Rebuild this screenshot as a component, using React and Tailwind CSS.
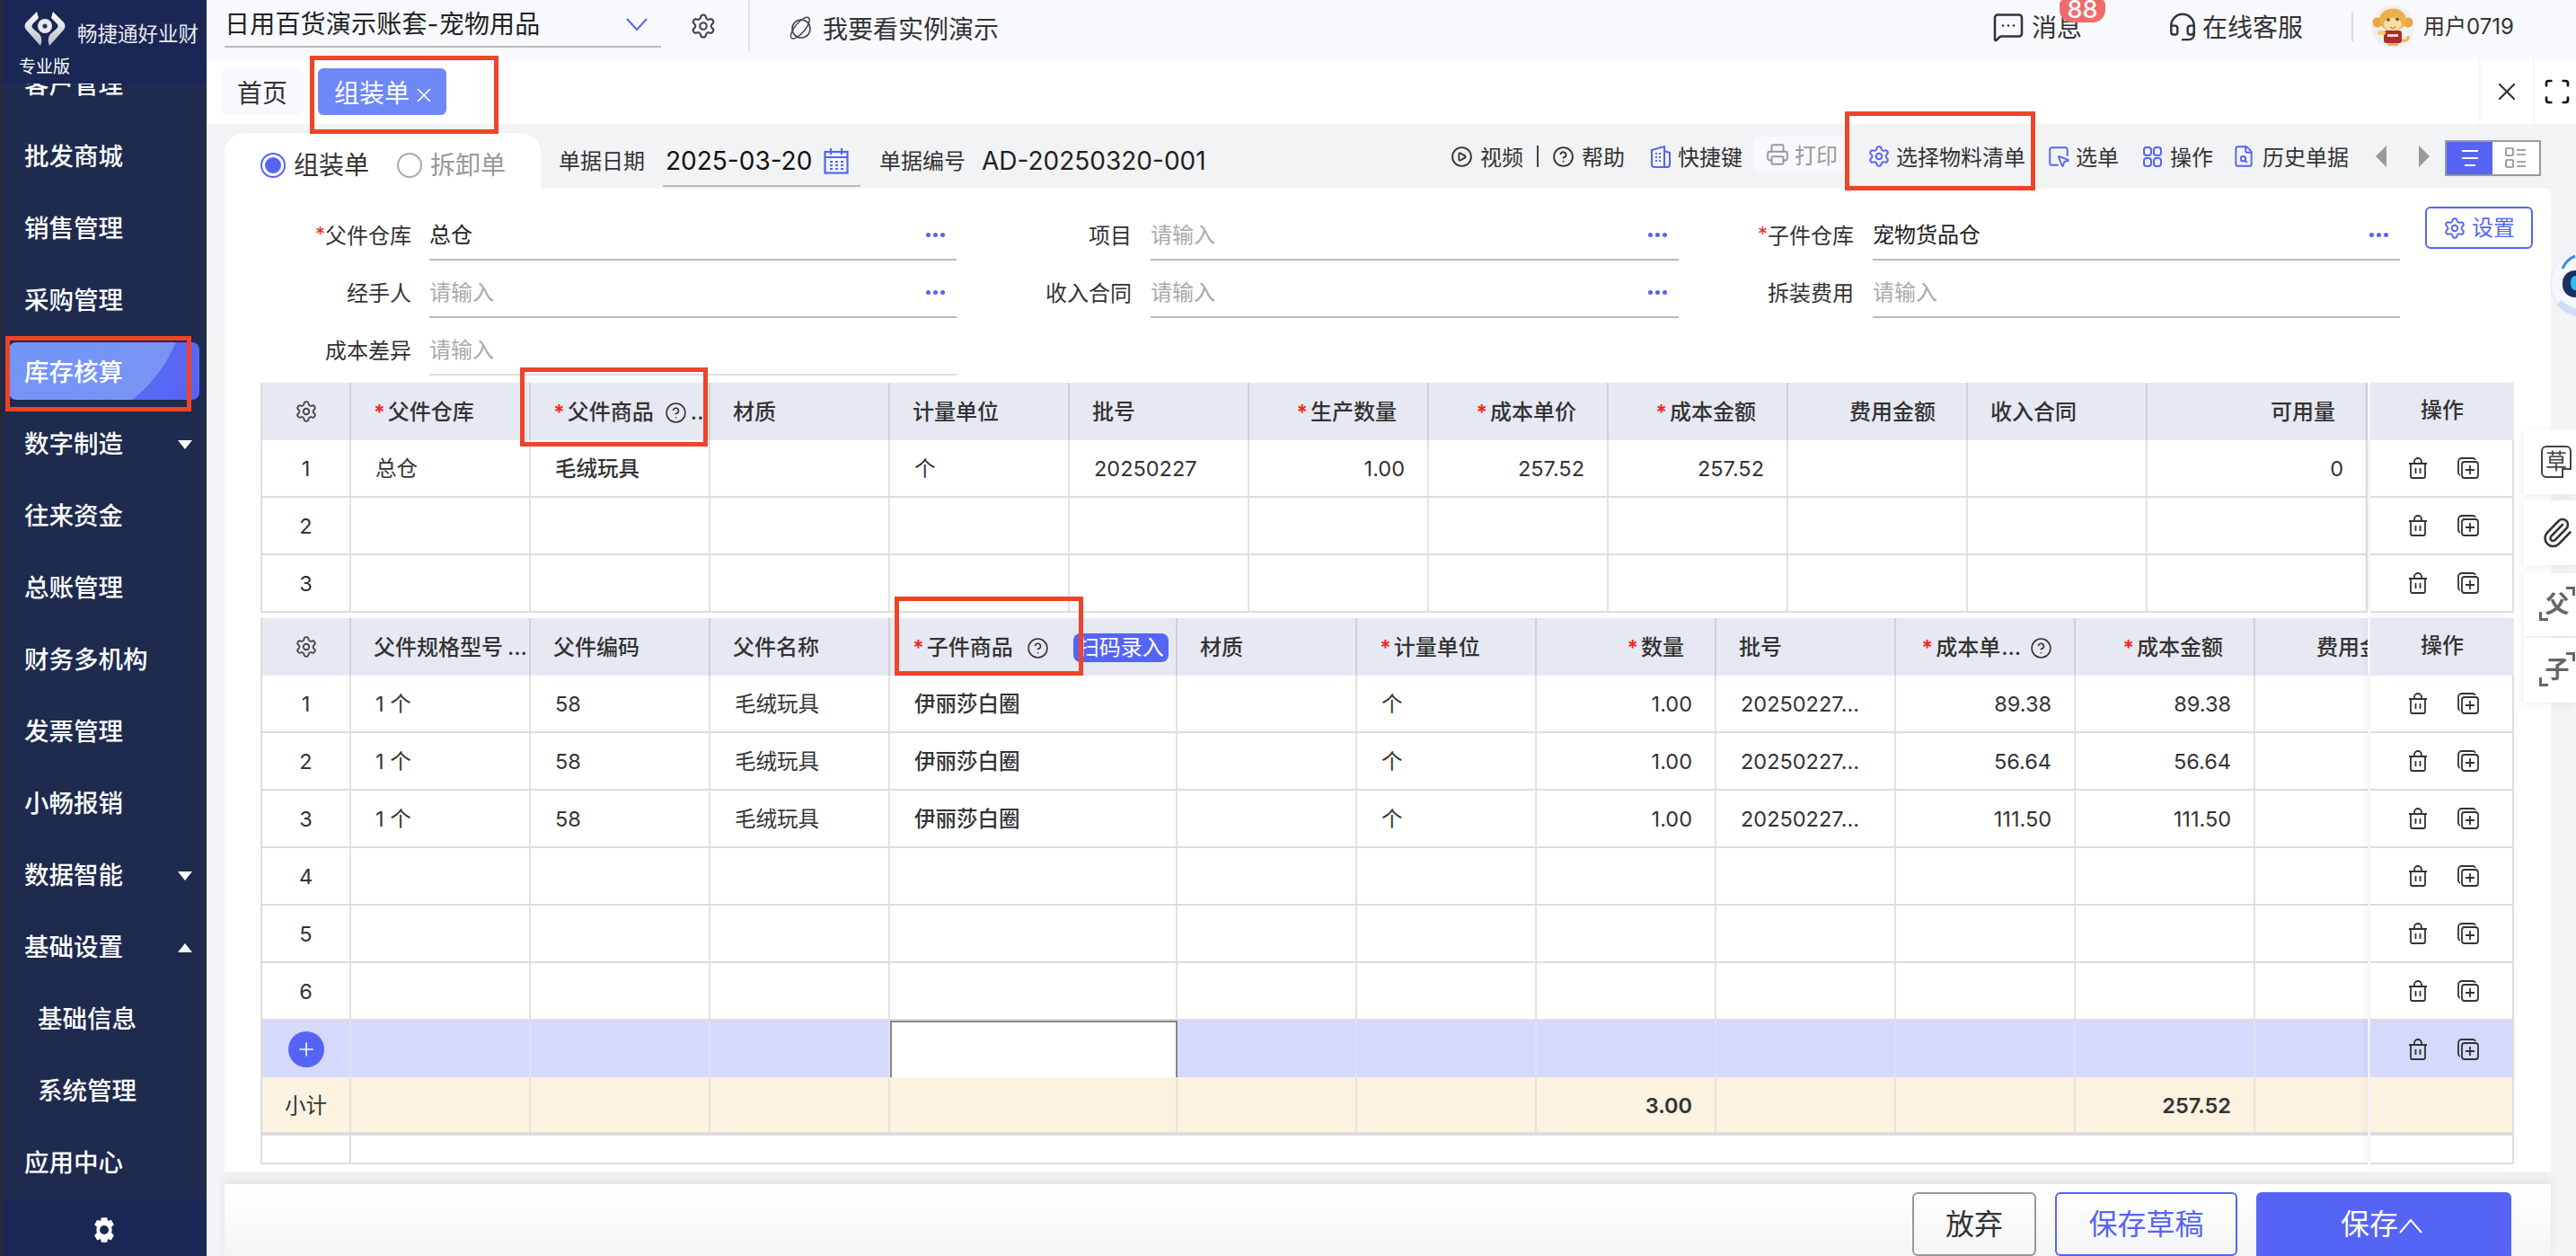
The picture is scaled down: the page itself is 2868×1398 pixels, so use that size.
import React from 'react';
import { Settings, X, Scan, MessageSquareMore, Headset, CirclePlay, CircleHelp, Printer, SquareMousePointer, FileSearch, Paperclip, Plus } from 'lucide-react';

const navItems = [
  { t: '客户管理' }, { t: '批发商城' }, { t: '销售管理' }, { t: '采购管理' },
  { t: '库存核算', active: true }, { t: '数字制造', caret: 'down' }, { t: '往来资金' }, { t: '总账管理' },
  { t: '财务多机构' }, { t: '发票管理' }, { t: '小畅报销' }, { t: '数据智能', caret: 'down' },
  { t: '基础设置', caret: 'up' }, { t: '基础信息', sub: true }, { t: '系统管理', sub: true }, { t: '应用中心' },
];

function Logo() {
  return (
    <svg width="46" height="38" viewBox="0 0 46 38" className="shrink-0">
      <defs>
        <linearGradient id="lg" x1="0" y1="0" x2="0" y2="1">
          <stop offset="0" stopColor="#ffffff" />
          <stop offset="1" stopColor="#b9bcc6" />
        </linearGradient>
      </defs>
      <path d="M14 0 L2 12 Q-1 16 2 20 L18 38 Q21 30 17 25 L10 19 Q7 16 10 13 L16 7 Z" fill="url(#lg)" />
      <path d="M32 0 L44 12 Q47 16 44 20 L28 38 Q25 30 29 25 L36 19 Q39 16 36 13 L30 7 Z" fill="url(#lg)" />
      <ellipse cx="23" cy="16" rx="8" ry="8" fill="#e8e9ee" />
      <circle cx="23" cy="16" r="2.6" fill="#2a3560" />
    </svg>
  );
}

function Sidebar() {
  return (
    <aside className="w-[230px] h-full shrink-0 flex flex-col bg-[#1e2b4f] border-l-2 border-[#2a2a30] overflow-hidden">
      <div className="relative z-10 h-[93px] shrink-0 bg-[#1a2755] pl-[25px] pt-[13px]">
        <div className="flex items-start">
          <Logo />
          <span className="ml-[13px] mt-[12px] text-[22.5px] leading-[26px] text-[#e9eaf0] whitespace-nowrap">畅捷通好业财</span>
        </div>
        <div className="-ml-[6px] mt-[12px] text-[19px] leading-[24px] text-white">专业版</div>
      </div>
      <nav className="flex-1 -mt-[40px] flex flex-col">
        {navItems.map((n) => (
          <div key={n.t} className="h-[80px] shrink-0 px-[8px] py-[8px]">
            <div className={n.active
              ? 'h-full rounded-[8px] flex items-center pl-[17px] text-white bg-[radial-gradient(circle_at_40px_-60px,#6b98f7_0px,#7a93f5_157px,#5a68f5_158px,#5664f5_100%)]'
              : n.sub ? 'h-full flex items-center pl-[32px] text-white' : 'h-full flex items-center pl-[17px] text-white'}>
              <span className="flex-1 pt-[1px] text-[27.5px] leading-[36px] font-medium whitespace-nowrap">{n.t}</span>
              {n.caret && (
                <svg width="16" height="10" viewBox="0 0 16 10" className="mr-[8px] mt-[4px]">
                  <polygon points={n.caret === 'up' ? '8,0 16,10 0,10' : '0,0 16,0 8,10'} fill="#fff" />
                </svg>
              )}
            </div>
          </div>
        ))}
      </nav>
      <div className="h-[64px] shrink-0 bg-[#1a2755] flex items-center justify-center">
        <svg width="30" height="32" viewBox="0 0 24 24" className="mt-[6px]">
          <path fill="#fff" fillRule="evenodd" d="M9.5 1h5l.8 3 2.9-1.1 2.5 4.4-2.2 2.1a8 8 0 0 1 0 5.2l2.2 2.1-2.5 4.4-2.9-1.1-.8 3h-5l-.8-3-2.9 1.1-2.5-4.4 2.2-2.1a8 8 0 0 1 0-5.2L3.3 7.3l2.5-4.4L8.7 4zM12 8a4 4 0 1 0 0 8 4 4 0 0 0 0-8z" />
        </svg>
      </div>
    </aside>
  );
}

function Planet() {
  return (
    <svg width="31" height="32" viewBox="0 0 31 32" fill="none" stroke="#444" strokeWidth="1.6">
      <circle cx="15" cy="16" r="10" />
      <ellipse cx="15.5" cy="15" rx="16" ry="6" transform="rotate(-50 15.5 15) scale(.92)" />
    </svg>
  );
}

function Monkey() {
  return (
    <svg width="48" height="48" viewBox="0 0 48 48" className="shrink-0">
      <circle cx="24" cy="24" r="24" fill="#efefef" />
      <path d="M32 38c6 3 10 0 9-4" stroke="#eeb158" strokeWidth="3" fill="none" />
      <circle cx="7" cy="19" r="5.5" fill="#eda544" />
      <circle cx="41" cy="19" r="5.5" fill="#eda544" />
      <ellipse cx="24" cy="16" rx="15" ry="12.5" fill="#eeb04c" />
      <ellipse cx="24" cy="21" rx="10" ry="7" fill="#f9dda2" />
      <circle cx="19" cy="16" r="1.8" fill="#553" />
      <circle cx="29" cy="15.5" r="1.8" fill="#553" />
      <path d="M21 24q3 3 6 0" fill="#fff" stroke="#a33" />
      <rect x="14" y="28" width="20" height="14" rx="3" fill="#b12a2a" />
      <rect x="18" y="32" width="12" height="3" fill="#f3d9d0" />
      <rect x="7" y="28" width="9" height="5" rx="2.5" fill="#f6cf6b" />
      <rect x="18" y="42" width="12" height="3" rx="1" fill="#eeb04c" />
    </svg>
  );
}

function TopBar() {
  return (
    <header className="h-[66px] shrink-0 bg-[#f7f9fd] flex items-start">
      <div className="ml-[20px] w-[486px] h-[53px] border-b-[2px] border-[#bbbbbb] flex items-center justify-between pr-[14px] pt-[3px] shrink-0">
        <span className="text-[28px] leading-[36px] tracking-[0.2px] text-[#222] whitespace-nowrap">日用百货演示账套-宠物用品</span>
        <svg width="26" height="16" viewBox="0 0 26 16" fill="none" stroke="#5664f5" strokeWidth="2"><path d="M2 2l11 12L24 2" /></svg>
      </div>
      <Settings size={30} strokeWidth={1.7} color="#444" className="ml-[32px] mt-[14px] shrink-0" />
      <div className="ml-[35px] w-[2px] h-[58px] bg-[#e3e4e8] shrink-0" />
      <div className="ml-[42px] h-[64px] flex items-center shrink-0">
        <Planet />
        <span className="ml-[8px] pt-[2px] text-[28px] text-[#333] whitespace-nowrap">我要看实例演示</span>
      </div>
      <div className="ml-auto h-[60px] flex items-center shrink-0">
        <MessageSquareMore size={36} strokeWidth={1.7} color="#333" />
        <span className="relative ml-[8px] pt-[2px] text-[28px] leading-[34px] text-[#333] whitespace-nowrap">
          消息
          <span className="absolute -top-[13px] left-[31px] w-[51px] h-[26px] rounded-b-[14px] rounded-t-[6px] bg-[#f06b6b] text-white text-[27px] font-medium leading-[24px] text-center">88</span>
        </span>
        <Headset size={34} strokeWidth={1.7} color="#333" className="ml-[95px]" />
        <span className="ml-[5px] pt-[2px] text-[28px] text-[#333] whitespace-nowrap">在线客服</span>
        <div className="ml-[54px] w-[2px] h-[32px] bg-[#d8d9de]" />
        <div className="ml-[20px]"><Monkey /></div>
        <span className="ml-[10px] mr-[69px] text-[24px] text-[#333] whitespace-nowrap">用户0719</span>
      </div>
    </header>
  );
}

function TabBar() {
  return (
    <div className="h-[72px] shrink-0 bg-white flex items-start">
      <div className="ml-[16px] mt-[10px] w-[92px] h-[52px] rounded-[6px] bg-[#f7f9fd] pt-[3px] text-[28px] leading-[50px] text-center text-[#333]">首页</div>
      <div className="ml-[16px] mt-[10px] w-[143px] h-[52px] rounded-[6px] bg-[#6f88f7] text-white flex items-center pl-[18px] pt-[3px]">
        <span className="text-[28px]">组装单</span>
        <X size={26} strokeWidth={1.5} className="ml-[3px] mt-[4px]" />
      </div>
      <div className="ml-auto h-full w-[60px] border-l-[2px] border-[#f5f6fb] flex items-center justify-center shrink-0">
        <X size={32} strokeWidth={1.6} color="#333" />
      </div>
      <div className="h-full w-[48px] border-l-[2px] border-[#f5f6fb] flex items-center justify-center shrink-0">
        <Scan size={32} strokeWidth={2} color="#111" className="ml-[3px]" />
      </div>
    </div>
  );
}

const Blue = '#5664f5';

function CalendarIcon() {
  return (
    <svg width="28" height="30" viewBox="0 0 28 30" fill="none" stroke={Blue} strokeWidth="2.2">
      <rect x="1.5" y="5" width="25" height="23.5" />
      <path d="M1.5 11h25M8 1v7M20 1v7" />
      <path d="M7 16h3M13 16h3M19 16h3M7 20h3M13 20h3M19 20h3M7 24h3M13 24h3M19 24h3" strokeWidth="2" />
    </svg>
  );
}

function Radio({ on, label }) {
  return (
    <div className="flex items-center">
      <span className={on ? 'w-[28px] h-[28px] rounded-full border-2 border-[#5664f5] flex items-center justify-center' : 'w-[28px] h-[28px] rounded-full border-2 border-[#aaaaaa]'}>
        {on && <span className="w-[18px] h-[18px] rounded-full bg-[#5664f5]" />}
      </span>
      <span className={on ? 'ml-[9px] text-[28px] text-[#333]' : 'ml-[9px] text-[28px] text-[#999]'}>{label}</span>
    </div>
  );
}

function BuildingIcon() {
  return (
    <svg width="24" height="26" viewBox="0 0 24 26" fill="none" stroke={Blue} strokeWidth="2" className="shrink-0">
      <path d="M2 6v16a3 3 0 0 0 3 3h14a3 3 0 0 0 3-3V9l-6-2V2z" />
      <path d="M16 7v18" />
      <path d="M6 10h2M10 10h2M6 14h2M10 14h2M6 18h2M10 18h2" strokeWidth="2" />
    </svg>
  );
}

function FourDots() {
  return (
    <svg width="21" height="23" viewBox="0 0 21 23" fill="none" stroke={Blue} strokeWidth="2" className="shrink-0">
      <rect x="1" y="1" width="8" height="9" rx="3" />
      <rect x="12" y="1" width="8" height="9" rx="3" />
      <rect x="1" y="13" width="8" height="9" rx="3" />
      <rect x="12" y="13" width="8" height="9" rx="3" />
    </svg>
  );
}

function Toolbar() {
  const tx = 'pt-[3px] whitespace-nowrap ';
  return (
    <div className="h-[72px] shrink-0 bg-[#f2f3f5] flex items-center">
      <div className="self-end w-[352px] h-[62px] bg-white rounded-t-[22px] flex items-center pl-[40px] pt-[10px] gap-[31px] shrink-0">
        <Radio on label="组装单" />
        <Radio label="拆卸单" />
      </div>
      <span className="ml-[20px] pt-[12px] text-[24px] text-[#333] whitespace-nowrap">单据日期</span>
      <div className="ml-[20px] self-end mb-[2px] w-[220px] h-[58px] border-b-[2px] border-[#bbbbbb] flex items-center pl-[3px] pt-[2px] shrink-0">
        <span className="text-[28px] text-[#111] whitespace-nowrap">2025-03-20</span>
        <span className="ml-[13px]"><CalendarIcon /></span>
      </div>
      <span className="ml-[21px] pt-[12px] text-[24px] text-[#333] whitespace-nowrap">单据编号</span>
      <span className="ml-[18px] pt-[10px] text-[28px] text-[#222] whitespace-nowrap">AD-20250320-001</span>
      <div className="ml-auto mr-[11px] flex items-center shrink-0 text-[24px] text-[#333]">
        <CirclePlay size={25} strokeWidth={1.8} color="#333" />
        <span className={tx + 'ml-[8px]'}>视频</span>
        <span className="ml-[15px] w-[2px] h-[24px] bg-[#444]" />
        <CircleHelp size={25} strokeWidth={1.8} color="#333" className="ml-[15px]" />
        <span className={tx + 'ml-[8px]'}>帮助</span>
        <span className="ml-[28px]"><BuildingIcon /></span>
        <span className={tx + 'ml-[7px]'}>快捷键</span>
        <div className="ml-[12px] mb-[4px] w-[103px] h-[40px] rounded-[6px] bg-[#f7f9fd] flex items-center pl-[14px] text-[#999]">
          <Printer size={26} strokeWidth={1.8} color="#999" />
          <span className={tx + 'ml-[6px]'}>打印</span>
        </div>
        <Settings size={26} strokeWidth={1.8} color={Blue} className="ml-[24px]" />
        <span className={tx + 'ml-[6px]'}>选择物料清单</span>
        <SquareMousePointer size={26} strokeWidth={1.8} color={Blue} className="ml-[24px]" />
        <span className={tx + 'ml-[6px]'}>选单</span>
        <span className="ml-[27px]"><FourDots /></span>
        <span className={tx + 'ml-[9px]'}>操作</span>
        <FileSearch size={26} strokeWidth={1.8} color={Blue} className="ml-[21px]" />
        <span className={tx + 'ml-[8px]'}>历史单据</span>
        <svg width="12" height="24" viewBox="0 0 12 24" className="ml-[30px]"><polygon points="12,0 12,24 0,12" fill="#999" /></svg>
        <svg width="12" height="24" viewBox="0 0 12 24" className="ml-[36px]"><polygon points="0,0 0,24 12,12" fill="#999" /></svg>
        <div className="ml-[17px] mt-[4px] w-[107px] h-[40px] border-[2px] border-[#999999] flex bg-white">
          <div className="w-[51px] h-full bg-[#5664f5] flex flex-col justify-center items-center gap-[6px]">
            <span className="w-[18px] h-[2px] bg-white" />
            <span className="w-[18px] h-[2px] bg-white" />
            <span className="w-[12px] h-[2px] bg-white" />
          </div>
          <div className="flex-1 flex items-center justify-center">
            <svg width="24" height="26" viewBox="0 0 24 26" fill="none" stroke="#888" strokeWidth="1.6">
              <rect x="1" y="2" width="8" height="8" rx="1" /><rect x="1" y="15" width="8" height="8" rx="1" />
              <path d="M13 4h10M13 9h10M13 17h10M13 22h10" />
            </svg>
          </div>
        </div>
      </div>
    </div>
  );
}

function Dots() {
  return (
    <span className="flex gap-[3px] mb-[2px]">
      <span className="w-[5px] h-[5px] rounded-full bg-[#5664f5]" />
      <span className="w-[5px] h-[5px] rounded-full bg-[#5664f5]" />
      <span className="w-[5px] h-[5px] rounded-full bg-[#5664f5]" />
    </span>
  );
}

function Field({ label, value, req, dots, labelCls, inputCls, light }) {
  return (
    <div className="flex h-[64px] shrink-0">
      <div className={'flex items-center justify-end pt-[10px] text-[24px] text-[#333] whitespace-nowrap ' + labelCls}>
        {req && <span className="text-[#f5281c] text-[22px] leading-none -mt-[6px]">*</span>}
        {label}
      </div>
      <div className={(light ? 'border-[#dddddd] ' : 'border-[#bbbbbb] ') + 'flex items-center justify-between pt-[10px] border-b-[2px] text-[24px] ' + inputCls}>
        <span className={value ? 'text-[#222]' : 'text-[#aaaaaa]'}>{value || '请输入'}</span>
        {dots && <span className="mr-[13px]"><Dots /></span>}
      </div>
    </div>
  );
}

function Form() {
  const L1 = 'w-[168px] mr-[20px]';
  const I1 = 'w-[587px]';
  const L2 = 'w-[195px] mr-[21px]';
  const I2 = 'w-[588px]';
  const I3 = 'w-[587px]';
  return (
    <div className="h-[208px] pt-[16px] flex shrink-0">
      <div className="flex flex-col">
        <div className="flex">
          <Field req label="父件仓库" value="总仓" dots labelCls={L1} inputCls={I1} />
          <Field label="项目" dots labelCls={L2} inputCls={I2} />
          <Field req label="子件仓库" value="宠物货品仓" dots labelCls={L2} inputCls={I3} />
        </div>
        <div className="flex">
          <Field label="经手人" dots labelCls={L1} inputCls={I1} />
          <Field label="收入合同" dots labelCls={L2} inputCls={I2} />
          <Field label="拆装费用" labelCls={L2} inputCls={I3} />
        </div>
        <div className="flex">
          <Field label="成本差异" labelCls={L1} inputCls={I1} light />
        </div>
      </div>
      <button className="ml-[28px] mt-[4px] w-[120px] h-[47px] rounded-[6px] border-[2px] border-[#5664f5] text-[#5664f5] text-[24px] flex items-center justify-center gap-[6px] shrink-0">
        <Settings size={26} strokeWidth={1.8} />
        设置
      </button>
    </div>
  );
}

function HelpMark({ cls }) {
  return <CircleHelp size={25} strokeWidth={1.5} color="#333" className={'shrink-0 ' + (cls || '')} />;
}

function Star() {
  return <span className="text-[#f5281c] text-[23px] leading-none mr-[3px] font-bold">*</span>;
}

function HeadCell({ c }) {
  if (c === 'gear') {
    return (
      <div className="h-[64px] bg-[#e6e8f2] border-r-[2px] border-[#cfd1d8] flex items-center justify-center">
        <Settings size={26} strokeWidth={1.7} color="#444" />
      </div>
    );
  }
  const o = typeof c === 'string' ? { t: c } : c;
  return (
    <div className={(o.tight ? 'justify-end pr-[24px] ' : o.right ? 'justify-end pr-[34px] ' : 'pl-[25px] ') + 'h-[64px] pt-[2px] bg-[#e6e8f2] border-r-[2px] border-[#cfd1d8] flex items-center text-[24px] font-medium text-[#333] whitespace-nowrap overflow-hidden'}>
      {o.req && <Star />}
      <span>{o.t}</span>
      {o.more && <span className={o.tight ? 'ml-[1px]' : 'ml-[5px]'}>{o.more}</span>}
      {o.help && <HelpMark cls={o.helpCls || 'ml-[15px]'} />}
      {o.tail && <span className="ml-[4px]">{o.tail}</span>}
      {o.badge && <span className="ml-[27px] h-[32px] px-[5px] rounded-[8px] bg-[#5664f5] text-white text-[24px] font-normal leading-[32px]">{o.badge}</span>}
    </div>
  );
}

function BodyCell({ c, bg }) {
  const o = c && typeof c === 'object' ? c : { t: c };
  const base = 'h-full pt-[2px] flex items-center border-r-[2px] text-[23.5px] text-[#333] whitespace-nowrap overflow-hidden ';
  const line = bg === 'blue' ? 'border-[#dfe1f5] ' : bg === 'beige' ? 'border-[#e6e3dc] ' : 'border-[#e2e2e2] ';
  if (o.sel) return <div className="h-full bg-white border-l-[2px] border-t-[2px] border-r-[2px] border-[#888888]" />;
  return (
    <div className={base + line + (o.center ? 'justify-center ' : o.right ? 'justify-end pr-[25px] ' : 'pl-[27px] ') + (o.num ? 'font-semibold ' : o.b ? 'font-medium text-[#111] ' : '')}>
      {o.t}
    </div>
  );
}

function Trash() {
  return (
    <svg width="20" height="24" viewBox="0 0 20 24" fill="none" stroke="#333" strokeWidth="1.8" strokeLinejoin="round">
      <path d="M0 7h20M6 7V5a4 4 0 0 1 8 0v2" />
      <path d="M2 7v14a2 2 0 0 0 2 2h12a2 2 0 0 0 2-2V7" />
      <path d="M7.5 12v6M12.5 12v6" />
    </svg>
  );
}

function CopyPlus() {
  return (
    <svg width="24" height="24" viewBox="0 0 24 24" fill="none" stroke="#333" strokeWidth="1.8">
      <path d="M3 20a3 3 0 0 1-2-3V5a4 4 0 0 1 4-4h12a3 3 0 0 1 3 2" />
      <rect x="5" y="5" width="18" height="18" rx="3" />
      <path d="M14 9v10M9 14h10" />
    </svg>
  );
}

function OpIcons() {
  return (
    <div className="flex items-center pl-[43px] gap-[34px] h-full">
      <Trash />
      <CopyPlus />
    </div>
  );
}

function OpCol({ rows, extra }) {
  return (
    <div className="w-[160px] shrink-0 ml-[3px] relative z-[1] shadow-[-5px_0_8px_rgba(0,0,0,0.05)]">
      <div className="h-[64px] pb-[3px] bg-[#e6e8f2] flex items-center justify-center text-[24px] font-medium text-[#333]">操作</div>
      {Array.from({ length: rows }).map((_, i) => (
        <div key={i} className="h-[64px] bg-white border-b-[2px] border-r-[2px] border-[#dddddd]"><OpIcons /></div>
      ))}
      {extra}
    </div>
  );
}

const t1Head = ['gear', { t: '父件仓库', req: true }, { t: '父件商品', req: true, help: true, helpCls: 'ml-[12px]', tail: '..' }, '材质', '计量单位', '批号',
  { t: '生产数量', req: true, right: true }, { t: '成本单价', req: true, right: true }, { t: '成本金额', req: true, right: true },
  { t: '费用金额', right: true }, '收入合同', { t: '可用量', right: true }];

const t1Rows = [
  [{ t: '1', center: true }, '总仓', { t: '毛绒玩具', b: true }, '', '个', '20250227', { t: '1.00', right: true }, { t: '257.52', right: true }, { t: '257.52', right: true }, '', '', { t: '0', right: true }],
  [{ t: '2', center: true }, '', '', '', '', '', '', '', '', '', '', ''],
  [{ t: '3', center: true }, '', '', '', '', '', '', '', '', '', '', ''],
];

function Table1() {
  return (
    <div className="flex h-[256px] shrink-0">
      <div className="w-[2346px] shrink-0 overflow-hidden border-l-[2px] border-[#dddddd]">
        <div className="grid grid-cols-[99px_repeat(10,200px)_245px]">
          {t1Head.map((c, i) => <HeadCell key={i} c={c} />)}
        </div>
        {t1Rows.map((r, i) => (
          <div key={i} className="h-[64px] grid grid-cols-[99px_repeat(10,200px)_245px] border-b-[2px] border-[#dddddd]">
            {r.map((c, j) => <BodyCell key={j} c={c} />)}
          </div>
        ))}
      </div>
      <OpCol rows={3} />
    </div>
  );
}

const t2Head = ['gear', { t: '父件规格型号', more: '…' }, '父件编码', '父件名称',
  { t: '子件商品', req: true, help: true, badge: '扫码录入' }, '材质', { t: '计量单位', req: true }, { t: '数量', req: true, right: true }, '批号',
  { t: '成本单', req: true, more: '…', help: true, helpCls: 'ml-[10px]', tight: true }, { t: '成本金额', req: true, right: true }, { t: '费用金额', right: true }];

function goodsRow(i, a, b) {
  return [{ t: String(i), center: true }, '1 个', '58', '毛绒玩具', { t: '伊丽莎白圈', b: true }, '', '个', { t: '1.00', right: true }, '20250227...', { t: a, right: true }, { t: b, right: true }, ''];
}
const emptyRow = (i) => [{ t: String(i), center: true }, '', '', '', '', '', '', '', '', '', '', ''];

const t2Rows = [goodsRow(1, '89.38', '89.38'), goodsRow(2, '56.64', '56.64'), goodsRow(3, '111.50', '111.50'), emptyRow(4), emptyRow(5), emptyRow(6)];

function Table2() {
  const cols = 'grid grid-cols-[99px_200px_200px_200px_320px_repeat(7,200px)]';
  return (
    <div className="flex shrink-0 mt-[6px]">
      <div className="w-[2346px] shrink-0 overflow-hidden border-l-[2px] border-[#dddddd]">
        <div className={cols}>
          {t2Head.map((c, i) => <HeadCell key={i} c={c} />)}
        </div>
        {t2Rows.map((r, i) => (
          <div key={i} className={'h-[64px] border-b-[2px] border-[#dddddd] ' + cols}>
            {r.map((c, j) => <BodyCell key={j} c={c} />)}
          </div>
        ))}
        <div className={'h-[63px] bg-[#d5d9fb] ' + cols}>
          <div className="h-full border-r-[2px] border-[#dfe1f5] flex items-center justify-center">
            <span className="w-[40px] h-[40px] rounded-full bg-[#5664f5] flex items-center justify-center"><Plus size={24} strokeWidth={1.6} color="#fff" /></span>
          </div>
          {['', '', '', { sel: true }, '', '', '', '', '', '', ''].map((c, j) => <BodyCell key={j} c={c} bg="blue" />)}
        </div>
        <div className={'h-[65px] bg-[#fbf2e0] border-b-[4px] border-[#dddddd] ' + cols}>
          {[{ t: '小计', center: true }, '', '', '', '', '', '', { t: '3.00', right: true, num: true }, '', '', { t: '257.52', right: true, num: true }, ''].map((c, j) => <BodyCell key={j} c={c} bg="beige" />)}
        </div>
        <div className={'h-[32px] border-b-[2px] border-[#dddddd] ' + cols}>
          <div className="h-full border-r-[2px] border-[#dddddd]" />
        </div>
      </div>
      <OpCol rows={6} extra={
        <>
          <div className="h-[63px] bg-[#d5d9fb] border-r-[2px] border-[#dddddd] shadow-[0_4px_6px_rgba(0,0,0,0.08)]"><OpIcons /></div>
          <div className="h-[65px] bg-[#fbf2e0] border-r-[2px] border-b-[4px] border-[#dddddd]" />
          <div className="h-[32px] bg-white border-r-[2px] border-b-[2px] border-[#dddddd]" />
        </>
      } />
    </div>
  );
}

function BottomBar() {
  return (
    <div className="mt-[14px] h-[80px] shrink-0 bg-gradient-to-b from-white to-[#f5f5f5] shadow-[0_-6px_10px_rgba(0,0,0,0.07)] flex items-end justify-end pr-[44px]">
      <button className="w-[138px] h-[71px] rounded-[6px] border-[2px] border-[#999999] text-[32px] text-[#333]">放弃</button>
      <button className="ml-[21px] w-[203px] h-[71px] rounded-[6px] border-[2px] border-[#5664f5] text-[32px] text-[#5664f5]">保存草稿</button>
      <button className="ml-[21px] w-[284px] h-[71px] rounded-t-[6px] bg-[#5664f5] text-[32px] text-white flex items-center justify-center pr-[4px]">
        保存
        <svg width="28" height="18" viewBox="0 0 28 18" fill="none" stroke="#fff" strokeWidth="2" className="mt-[4px]"><path d="M2 16L14 2l12 14" /></svg>
      </button>
    </div>
  );
}

function Robot() {
  return (
    <svg width="78" height="78" viewBox="0 0 78 78" className="absolute left-[2839px] top-[277px]">
      <circle cx="39" cy="39" r="38" fill="#f4f7fc" stroke="#e4e8f0" />
      <path d="M14 22q4-10 14-14" stroke="#3f8be8" strokeWidth="3" fill="none" />
      <rect x="14" y="24" width="40" height="30" rx="14" fill="#1c2f66" />
      <ellipse cx="28" cy="38" rx="5" ry="8" fill="#29c0ee" />
      <path d="M10 60q12 12 34 12" stroke="#cfdcf5" strokeWidth="8" fill="none" />
    </svg>
  );
}

function SideTools() {
  const box = 'w-[58px] bg-white shadow-[-2px_2px_8px_rgba(0,0,0,0.07)] flex items-center pl-[19px] shrink-0';
  const corners = (
    <>
      <span className="absolute left-[-2px] bottom-[-2px] w-[10px] h-[10px] border-l-[3px] border-b-[3px] border-[#666]" />
      <span className="absolute right-[-2px] top-[-4px] w-[10px] h-[10px] border-r-[3px] border-t-[3px] border-[#666]" />
    </>
  );
  return (
    <div className="absolute left-[2810px] top-[478px] flex flex-col">
      <div className={box + ' h-[72px]'}>
        <div className="relative w-[34px] h-[36px] border-[2px] border-[#444] rounded-[6px] text-[24px] leading-[32px] text-center text-[#444]">
          草
          <span className="absolute right-[-2px] bottom-[-2px] w-[11px] h-[11px] bg-white border-l-[2px] border-t-[2px] border-[#444]" />
        </div>
      </div>
      <div className={box + ' h-[72px] mt-[7px]'}>
        <Paperclip size={36} strokeWidth={1.7} color="#333" />
      </div>
      <div className={box + ' h-[70px] mt-[9px]'}>
        <div className="relative w-[36px] h-[32px] text-[27px] font-bold leading-[32px] text-center text-[#666]">父{corners}</div>
      </div>
      <div className={box + ' h-[72px] mt-[2px]'}>
        <div className="relative w-[36px] h-[32px] text-[27px] font-bold leading-[32px] text-center text-[#666]">子{corners}</div>
      </div>
    </div>
  );
}

function RedBox({ cls }) {
  return <div className={'absolute z-20 border-[5px] border-[#ee4428] pointer-events-none ' + cls} />;
}

export default function App() {
  return (
    <div className="relative w-[2868px] h-[1398px] overflow-hidden flex font-['Inter','Noto_Sans_CJK_SC',sans-serif] bg-[#f3f4f6]">
      <Sidebar />
      <main className="flex-1 min-w-0 flex flex-col h-full">
        <TopBar />
        <TabBar />
        <div className="flex-1 min-h-0 pl-[20px] pr-[28px] flex flex-col">
          <Toolbar />
          <section className="h-[1094px] shrink-0 bg-white pl-[40px] flex flex-col">
            <Form />
            <div className="mt-[8px] flex flex-col">
              <Table1 />
              <Table2 />
            </div>
          </section>
          <BottomBar />
        </div>
      </main>
      <Robot />
      <SideTools />
      <RedBox cls="left-[345px] top-[62px] w-[210px] h-[87px]" />
      <RedBox cls="left-[6px] top-[374px] w-[207px] h-[84px]" />
      <RedBox cls="left-[2054px] top-[124px] w-[212px] h-[88px]" />
      <RedBox cls="left-[579px] top-[409px] w-[209px] h-[88px]" />
      <RedBox cls="left-[996px] top-[664px] w-[210px] h-[88px]" />
    </div>
  );
}
